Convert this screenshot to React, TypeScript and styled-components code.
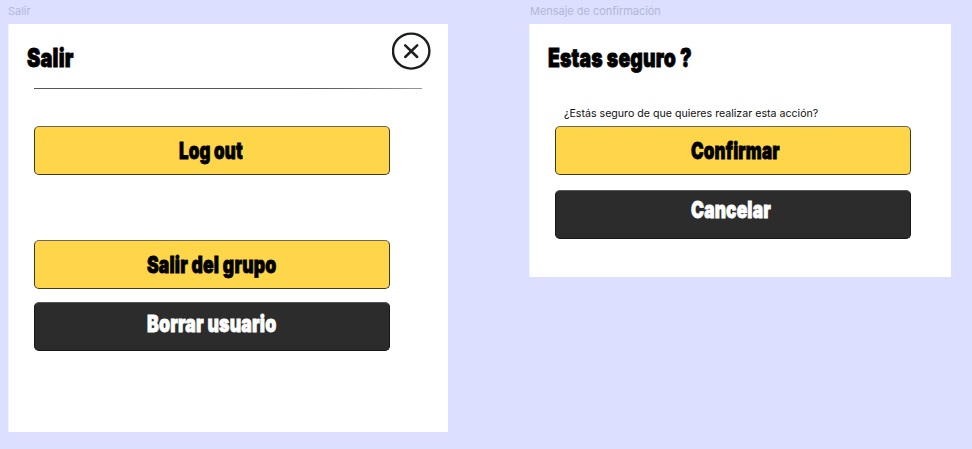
import React, { useLayoutEffect, useRef, useState } from "react";
import styled, { createGlobalStyle } from "styled-components";

const GlobalStyle = createGlobalStyle`
  * { box-sizing: border-box; }
  body { margin: 0; background: #dcdfff; }
`;

const Canvas = styled.main`
  display: flex;
  align-items: flex-start;
  gap: 81px;
  width: 972px;
  height: 449px;
  padding: 4px 0 0 8px;
  overflow: hidden;
  background: #dcdfff;
  font-family: Inter, "Liberation Sans", sans-serif;
`;

const Artboard = styled.section<{ $width: number }>`
  width: ${(p) => p.$width}px;
  flex: none;
`;

const ArtboardLabel = styled.div<{ $indent?: number }>`
  height: 20px;
  padding-left: ${(p) => p.$indent ?? 0}px;
  font-size: 11px;
  line-height: 15px;
  letter-spacing: -0.03px;
  color: #b4b7d6;
  white-space: nowrap;
`;

const Frame = styled.div<{ $height: number }>`
  display: flex;
  flex-direction: column;
  height: ${(p) => p.$height}px;
  background: #fff;
  border: solid #f2f3ff;
  border-width: 0 0 0 1px;
`;

const Header = styled.header`
  display: flex;
  justify-content: space-between;
  height: 64px;
  padding: 8px 17px 0 17.5px;
`;

const Title = styled.h1`
  margin: 10px 0 0;
  height: 32px;
  font-size: 26px;
  line-height: 32px;
  font-weight: 900;
  color: #000;
`;

const CloseButton = styled.button`
  width: 39px;
  height: 39px;
  padding: 0;
  border: 0;
  background: none;
`;

const Divider = styled.hr`
  width: 388px;
  height: 1px;
  margin: 0 0 0 25px;
  border: 0;
  background: linear-gradient(90deg, #555 0 66%, #666 80%, #999);
`;

const Question = styled.p`
  margin: 0 0 0 34px;
  padding-top: 18px;
  height: 38px;
  font-size: 10.63px;
  line-height: 16px;
  color: #111;
  white-space: nowrap;
`;

const Action = styled.button<{ $dark?: boolean; $top: number; $inset: number; $textTop: number }>`
  display: block;
  flex: none;
  width: 356px;
  height: 49px;
  margin: ${(p) => p.$top}px 0 0 25px;
  padding: ${(p) => p.$textTop}px 0 0 ${(p) => p.$inset}px;
  border: 1px solid ${(p) => (p.$dark ? "#161616" : "#40391f")};
  border-top-color: ${(p) => (p.$dark ? "#555" : "#6f6a58")};
  border-radius: 5px;
  background: ${(p) => (p.$dark ? "#2c2c2c" : "#ffd54a")};
  color: ${(p) => (p.$dark ? "#fff" : "#000")};
  font: 900 23px/28px Inter, "Liberation Sans", sans-serif;
  text-align: left;
`;

const TextBox = styled.span<{ $width: number }>`
  display: block;
  width: ${(p) => p.$width}px;
  height: 100%;
  white-space: nowrap;
`;

const TextRun = styled.span`
  display: inline-block;
  transform-origin: 0 50%;
  letter-spacing: 0.2px;
  -webkit-text-stroke: 0.8px currentColor;
`;

/* Squeezes heavy lettering horizontally into a poster-style condensed face. */
function Condensed({ width, children }: { width: number; children: string }) {
  const ref = useRef<HTMLSpanElement>(null);
  const [scale, setScale] = useState(0.7);
  useLayoutEffect(() => {
    const fit = () => {
      if (ref.current) setScale(width / ref.current.offsetWidth);
    };
    fit();
    document.fonts.ready.then(fit);
  }, [width, children]);
  return (
    <TextBox $width={width}>
      <TextRun ref={ref} style={{ transform: `scaleX(${scale})` }}>
        {children}
      </TextRun>
    </TextBox>
  );
}

function CloseIcon() {
  return (
    <svg width="39" height="39" viewBox="0 0 39 39" fill="none" stroke="#1e1e1e" strokeLinecap="round">
      <ellipse cx="19.2" cy="19.1" rx="18.2" ry="17.5" strokeWidth="2.4" />
      <path d="M13.2 13.4 25.2 25M25.2 13.4 13.2 25" strokeWidth="2.5" />
    </svg>
  );
}

export default function App() {
  return (
    <>
      <GlobalStyle />
      <Canvas>
        <Artboard $width={440}>
          <ArtboardLabel>Salir</ArtboardLabel>
          <Frame $height={408}>
            <Header>
              <Title>
                <Condensed width={47}>Salir</Condensed>
              </Title>
              <CloseButton aria-label="Cerrar">
                <CloseIcon />
              </CloseButton>
            </Header>
            <Divider />
            <Action $top={37} $inset={144} $textTop={10}>
              <Condensed width={64}>Log out</Condensed>
            </Action>
            <Action $top={65} $inset={112} $textTop={10}>
              <Condensed width={129}>Salir del grupo</Condensed>
            </Action>
            <Action $dark $top={13} $inset={112} $textTop={7}>
              <Condensed width={129}>Borrar usuario</Condensed>
            </Action>
          </Frame>
        </Artboard>
        <Artboard $width={422}>
          <ArtboardLabel $indent={1}>Mensaje de confirmación</ArtboardLabel>
          <Frame $height={253}>
            <Header>
              <Title>
                <Condensed width={144}>Estas seguro ?</Condensed>
              </Title>
            </Header>
            <Question>¿Estás seguro de que quieres realizar esta acción?</Question>
            <Action $top={0} $inset={135} $textTop={10}>
              <Condensed width={89}>Confirmar</Condensed>
            </Action>
            <Action $dark $top={15} $inset={135} $textTop={5}>
              <Condensed width={80}>Cancelar</Condensed>
            </Action>
          </Frame>
        </Artboard>
      </Canvas>
    </>
  );
}
